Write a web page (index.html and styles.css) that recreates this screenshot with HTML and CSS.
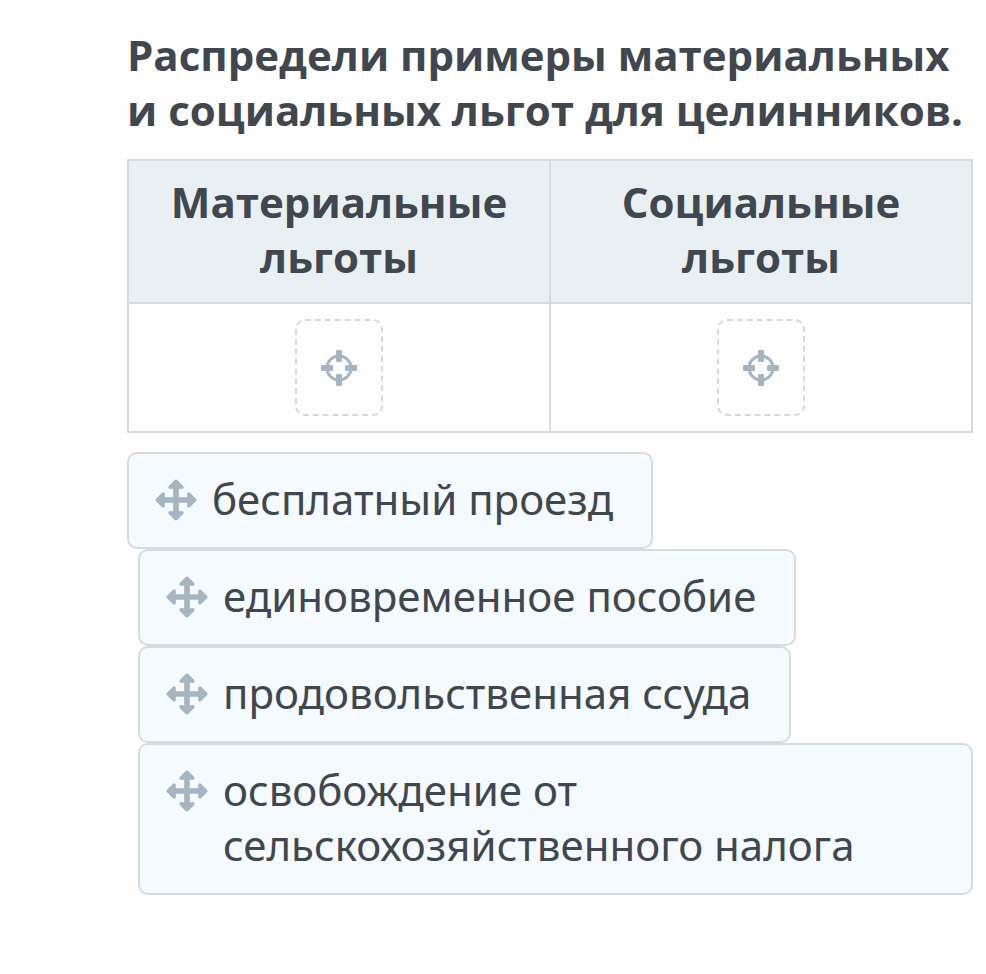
FILE: index.html
```html
<!DOCTYPE html>
<html lang="ru">
  <head>
    <meta charset="UTF-8" />
    <meta name="viewport" content="width=device-width, initial-scale=1.0" />
    <title>Льготы для целинников</title>
    <link rel="stylesheet" href="styles.css">
  </head>
  <body>
    <svg class="sprite" aria-hidden="true">
      <symbol id="target" viewBox="0 0 36 36">
        <circle cx="18" cy="18" r="12" fill="none" stroke="currentColor" stroke-width="3" />
        <rect x="15" y="0" width="6" height="12" rx="1" />
        <rect x="15" y="24" width="6" height="12" rx="1" />
        <rect x="0" y="15" width="12" height="6" rx="1" />
        <rect x="24" y="15" width="12" height="6" rx="1" />
      </symbol>
      <symbol id="move" viewBox="0 0 42 42">
        <path d="M19.5 1.2Q21-.4 22.5 1.2L28 6.8Q29.2 8.2 28.2 9.2T26 9.8H23.8V18.2H32.2V16Q31.8 14.8 32.8 13.8T35.2 14L40.8 19.5Q42.4 21 40.8 22.5L35.2 28Q33.8 29.2 32.8 28.2T32.2 26V23.8H23.8V32.2H26Q27.2 31.8 28.2 32.8T28 35.2L22.5 40.8Q21 42.4 19.5 40.8L14 35.2Q12.8 33.8 13.8 32.8T16 32.2H18.2V23.8H9.8V26Q10.2 27.2 9.2 28.2T6.8 28L1.2 22.5Q-.4 21 1.2 19.5L6.8 14Q8.2 12.8 9.2 13.8T9.8 16V18.2H18.2V9.8H16Q14.8 10.2 13.8 9.2T14 6.8Z" />
      </symbol>
    </svg>

    <main class="task">
      <h1 class="task-title">Распредели примеры материальных и&nbsp;социальных льгот для целинников.</h1>

      <table class="groups">
        <thead>
          <tr>
            <th scope="col">Материальные льготы</th>
            <th scope="col">Социальные льготы</th>
          </tr>
        </thead>
        <tbody>
          <tr>
            <td>
              <div class="drop-zone">
                <svg class="target-icon"><use href="#target" /></svg>
              </div>
            </td>
            <td>
              <div class="drop-zone">
                <svg class="target-icon"><use href="#target" /></svg>
              </div>
            </td>
          </tr>
        </tbody>
      </table>

      <div class="options">
        <button type="button" class="option" draggable="true">
          <svg class="move-icon"><use href="#move" /></svg>
          <span>бесплатный проезд</span>
        </button>
        <button type="button" class="option" draggable="true">
          <svg class="move-icon"><use href="#move" /></svg>
          <span>единовременное пособие</span>
        </button>
        <button type="button" class="option" draggable="true">
          <svg class="move-icon"><use href="#move" /></svg>
          <span>продовольственная ссуда</span>
        </button>
        <button type="button" class="option" draggable="true">
          <svg class="move-icon"><use href="#move" /></svg>
          <span>освобождение от сельскохозяйственного налога</span>
        </button>
      </div>
    </main>
  </body>
</html>
```
FILE: styles.css
```css
* {
  margin: 0;
  padding: 0;
  box-sizing: border-box;
}

body {
  background-color: #fefefe;
  color: #40474f;
  font-family: "Noto Sans", "Open Sans", sans-serif;
  font-size: 42px;
  line-height: 55px;
}

.sprite {
  display: none;
}

.task {
  padding: 27px 13px 28px 127px;
}

.task-title,
.groups {
  font-family: "Open Sans", "Noto Sans", sans-serif;
}

.task-title {
  margin-bottom: 22px;
  font-size: 42px;
  font-weight: bold;
}

.groups {
  width: 100%;
  table-layout: fixed;
  border-collapse: collapse;
  margin-bottom: 19px;
}

.groups th,
.groups td {
  border: 2px solid #d5dce0;
  text-align: center;
}

.groups th {
  padding: 13px 16px 18px;
  background-color: #e9f0f4;
  font-weight: bold;
}

.groups td {
  padding: 15px;
}

.drop-zone {
  display: flex;
  align-items: center;
  justify-content: center;
  width: 88px;
  height: 97px;
  margin: 0 auto;
  border: 2px dashed #d5d9dd;
  border-radius: 10px;
}

.target-icon {
  width: 36px;
  height: 36px;
  color: #a5b5c2;
  fill: currentColor;
}

.options {
  display: flex;
  flex-direction: column;
  align-items: flex-start;
}

.option {
  display: flex;
  align-items: flex-start;
  gap: 15px;
  padding: 17px 38px 21px 26px;
  border: 2px solid #d5dce0;
  border-radius: 10px;
  background-color: #f5fafe;
  color: inherit;
  font: inherit;
  text-align: left;
  cursor: grab;
}

.option + .option {
  margin-left: 11px;
}

.move-icon {
  flex: none;
  width: 42px;
  height: 42px;
  margin-top: 8px;
  fill: #a5b5c2;
}
```
